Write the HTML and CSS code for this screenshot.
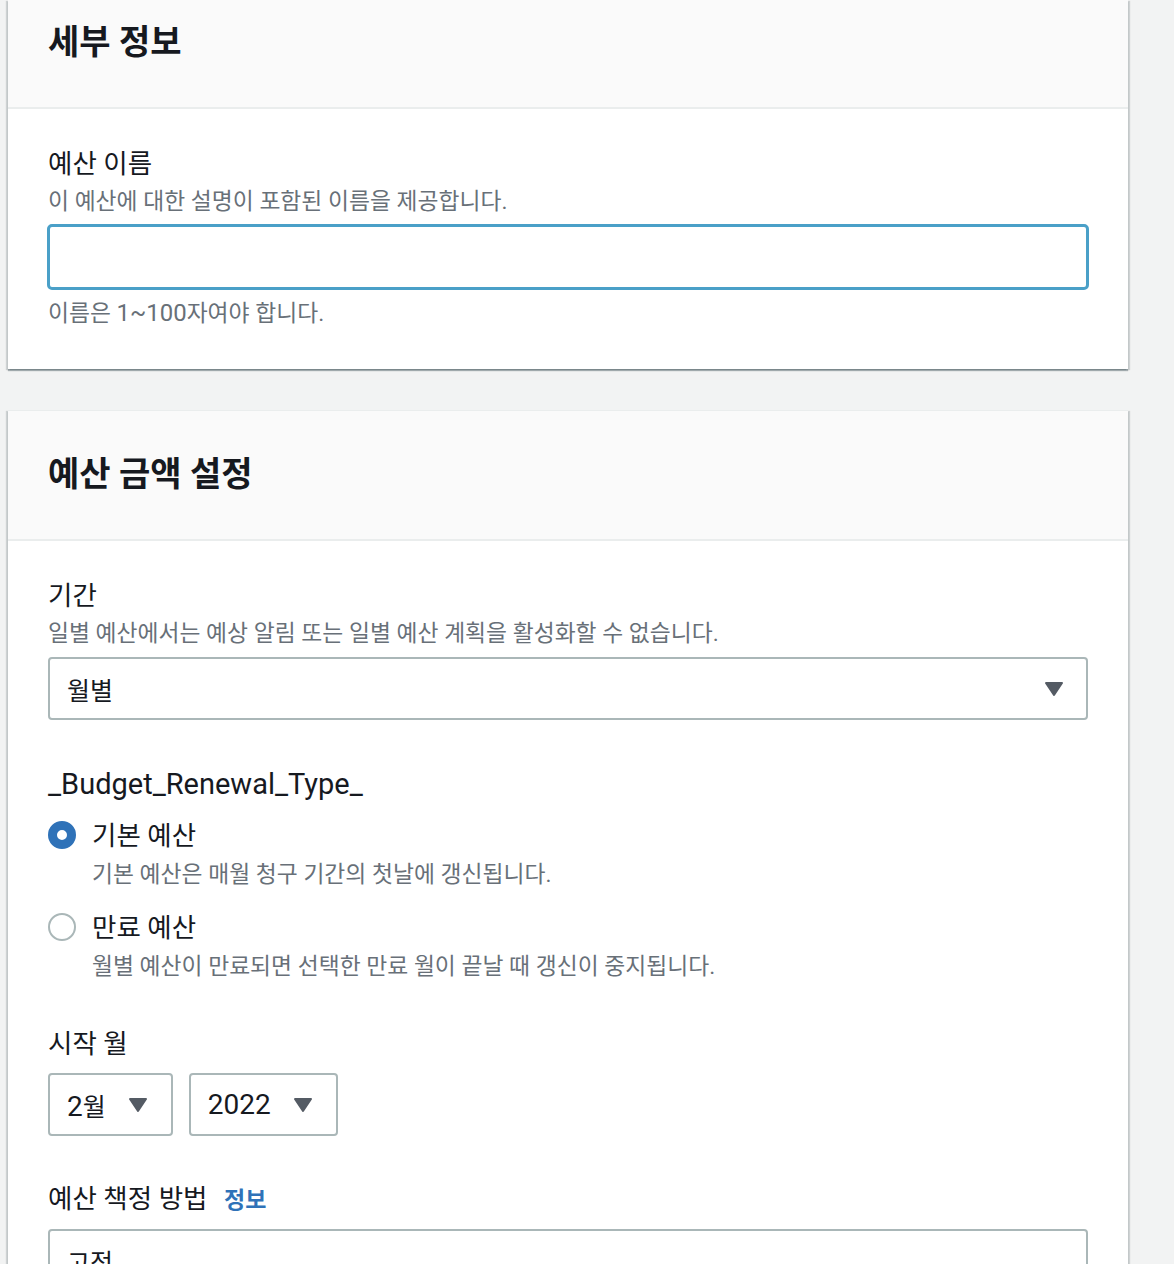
FILE: index.html
```html
<!DOCTYPE html>
<html lang="ko">
<head>
  <meta charset="UTF-8" />
  <meta name="viewport" content="width=device-width, initial-scale=1" />
  <title>예산 생성</title>
  <link rel="stylesheet" href="styles.css">
</head>
<body>

<div class="page">

  <section class="panel">
    <div class="panel-header panel-header-first">
      <h2>세부 정보</h2>
    </div>
    <div class="panel-body panel-body-first">
      <div class="field-label">예산 이름</div>
      <div class="field-desc">이 예산에 대한 설명이 포함된 이름을 제공합니다.</div>
      <div class="text-input"></div>
      <div class="field-desc field-constraint">이름은 <span class="latin">1~100</span>자여야 합니다.</div>
    </div>
  </section>

  <section class="panel panel-second">
    <div class="panel-header">
      <h2>예산 금액 설정</h2>
    </div>
    <div class="panel-body">

      <div class="field field-first">
        <div class="field-label">기간</div>
        <div class="field-desc">일별 예산에서는 예상 알림 또는 일별 예산 계획을 활성화할 수 없습니다.</div>
        <div class="select select-wide">
          <span class="select-value">월별</span>
          <svg class="caret" width="20" height="16" viewBox="0 0 20 16"><polygon points="2,2 18,2 10,14" /></svg>
        </div>
      </div>

      <div class="field field-renewal">
        <div class="field-label field-label-latin">_Budget_Renewal_Type_</div>
        <div class="radio-list">
          <div class="radio-option">
            <span class="radio radio-checked"></span>
            <div>
              <div class="field-label radio-label">기본 예산</div>
              <div class="field-desc">기본 예산은 매월 청구 기간의 첫날에 갱신됩니다.</div>
            </div>
          </div>
          <div class="radio-option">
            <span class="radio"></span>
            <div>
              <div class="field-label radio-label">만료 예산</div>
              <div class="field-desc">월별 예산이 만료되면 선택한 만료 월이 끝날 때 갱신이 중지됩니다.</div>
            </div>
          </div>
        </div>
      </div>

      <div class="field field-month">
        <div class="field-label">시작 월</div>
        <div class="select-row">
          <div class="select">
            <span class="select-value"><span class="latin-num">2</span>월</span>
            <svg class="caret" width="20" height="16" viewBox="0 0 20 16"><polygon points="2,2 18,2 10,14" /></svg>
          </div>
          <div class="select">
            <span class="select-value select-value-num">2022</span>
            <svg class="caret" width="20" height="16" viewBox="0 0 20 16"><polygon points="2,2 18,2 10,14" /></svg>
          </div>
        </div>
      </div>

      <div class="field field-method">
        <div class="field-label">예산 책정 방법 <a class="info-link" href="#">정보</a></div>
        <div class="select select-wide select-method">
          <span class="select-value">고정</span>
        </div>
      </div>

    </div>
  </section>

</div>

</body>
</html>
```

FILE: styles.css
```css
:root {
  --bg-page: #f2f3f3;
  --bg-header: #fafafa;
  --text-main: #16191f;
  --text-muted: #687078;
  --border-field: #aab7b8;
  --border-light: #eaeded;
  --focus: #4aa0c8;
  --link: #2f72b8;
}

html, body {
  overflow: hidden;
}

body {
  margin: 0;
  font-family: Roboto, "Noto Sans CJK KR", sans-serif;
  background: var(--bg-page);
  color: var(--text-main);
}

.page {
  padding: 0 46px 0 8px;
}

.panel {
  background: #fff;
  box-shadow: 0 2px 1px 0 rgba(0, 28, 36, 0.3),
              2px 1px 1px 0 rgba(0, 28, 36, 0.15),
              -2px 1px 1px 0 rgba(0, 28, 36, 0.15);
}

.panel-second {
  margin-top: 41px;
  border-top: 1px solid var(--border-light);
}

.panel-header {
  background: var(--bg-header);
  padding: 43px 40px 45px;
  border-bottom: 2px solid var(--border-light);
}

.panel-header-first {
  padding-top: 22px;
  padding-bottom: 45px;
}

.panel-header h2 {
  margin: 0;
  font-size: 34px;
  line-height: 40px;
  font-weight: 700;
}

.panel-body {
  padding: 0 40px;
}

.panel-body-first {
  padding-top: 37px;
  padding-bottom: 35px;
}

.field-label {
  font-size: 26.5px;
  line-height: 36px;
}

.field-label-latin {
  font-size: 29px;
}

.radio-label {
  line-height: 38px;
}

.field-desc {
  font-size: 22.8px;
  line-height: 40px;
  color: var(--text-muted);
}

.latin {
  font-size: 1.05em;
  line-height: 1;
}

.text-input {
  margin-top: 2px;
  height: 60px;
  border: 3px solid var(--focus);
  border-radius: 5px;
  margin-left: -1px;
  margin-right: -1px;
}

.field-constraint {
  margin-top: 4px;
}

.field-first {
  padding-top: 37px;
}

.field-renewal {
  margin-top: 46px;
}

.field-month {
  margin-top: 39px;
}

.field-method {
  margin-top: 45px;
}

.select {
  display: inline-flex;
  align-items: center;
  gap: 22px;
  box-sizing: border-box;
  height: 63px;
  padding: 0 23px 0 17px;
  border: 2px solid var(--border-field);
  border-radius: 4px;
  background: #fff;
}

.select-wide {
  display: flex;
  justify-content: space-between;
  margin-top: 3px;
  padding-right: 22px;
}

.select-method {
  margin-top: 10px;
}

.select-value {
  font-size: 25px;
  color: var(--text-main);
}

.select-value-num,
.latin-num {
  font-size: 28px;
  line-height: 1;
}

.caret polygon {
  fill: #545b64;
  stroke: #545b64;
  stroke-width: 2;
  stroke-linejoin: round;
}

.select-row {
  display: flex;
  gap: 16px;
  margin-top: 11px;
}

.radio-list {
  margin-top: 15px;
  display: flex;
  flex-direction: column;
  gap: 14px;
}

.radio-option {
  display: flex;
  gap: 16px;
}

.radio {
  flex: none;
  box-sizing: border-box;
  width: 28px;
  height: 28px;
  margin-top: 4px;
  border-radius: 50%;
  border: 2px solid var(--border-field);
  background: #fff;
}

.radio-checked {
  border: 9px solid var(--link);
}

.info-link {
  margin-left: 10px;
  font-size: 23px;
  font-weight: 700;
  color: var(--link);
  text-decoration: none;
}
```
